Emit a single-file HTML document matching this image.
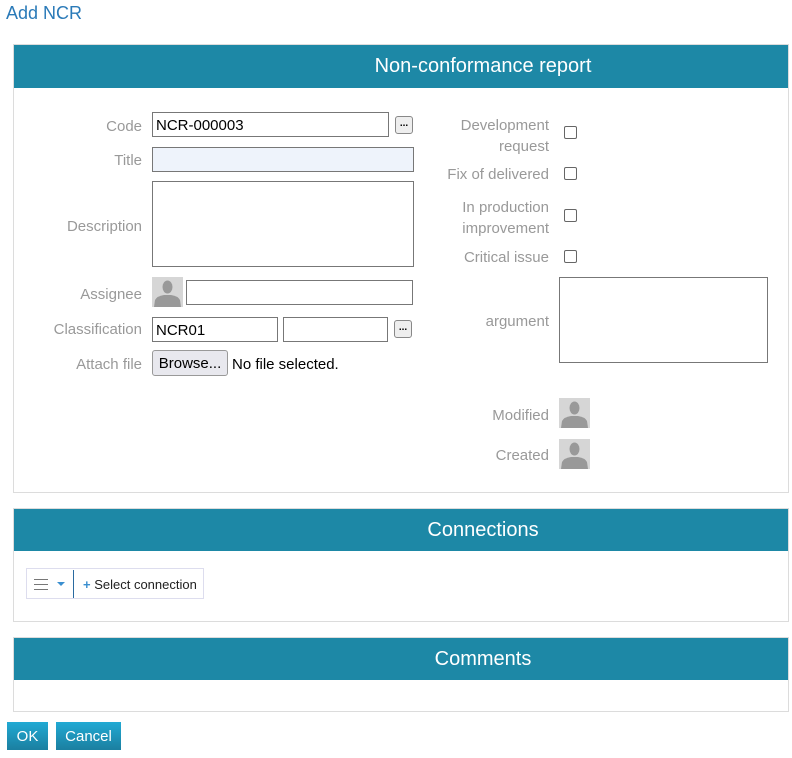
<!DOCTYPE html>
<html><head><style>
body{margin:0;width:792px;height:758px;background:#fff;font-family:"Liberation Sans",sans-serif;position:relative;overflow:hidden}
.a{position:absolute}
.t{font-size:18px;color:#2a7ab8;left:6px;top:3px}
.p{position:absolute;left:13px;width:776px;border:1px solid #dcdcdc;box-sizing:border-box}
.h{position:absolute;left:0;right:0;top:0;height:43px;background:#1d88a6;color:#fff;font-size:20px;text-align:center;line-height:43px;padding-left:164px;box-sizing:border-box}
.l{position:absolute;color:#999;font-size:15px;text-align:right}
.i{position:absolute;border:1px solid #777;background:#fff;box-sizing:border-box;font-size:15px;color:#000;padding-left:3px;line-height:25px}
.d{position:absolute;width:18px;height:18px;border:1px solid #888;border-radius:3px;background:#eee;box-sizing:border-box;font-size:10px;text-align:center;line-height:14px;font-weight:bold}
.c{position:absolute;width:13px;height:13px;border:1px solid #666;box-sizing:border-box;border-radius:2px}
.av{position:absolute;width:31px;height:30px;background:#d6d6d6}
.btn{position:absolute;top:722px;height:28px;background:linear-gradient(#21aad4,#1b7fa0);color:#fff;font-size:15px;line-height:29px;text-align:center}
</style></head><body>
<div class="a t">Add NCR</div>
<div class="p" style="top:44px;height:449px"><div class="h">Non-conformance report</div></div>
<div class="p" style="top:508px;height:114px"><div class="h" style="height:42px;line-height:42px">Connections</div></div>
<div class="p" style="top:637px;height:75px"><div class="h" style="height:42px;line-height:42px">Comments</div></div>

<div class="l" style="right:650px;top:118px">Code</div>
<div class="i" style="left:152px;top:112px;width:237px;height:25px">NCR-000003</div>
<div class="d" style="left:395px;top:116px">...</div>
<div class="l" style="right:650px;top:152px">Title</div>
<div class="i" style="left:152px;top:147px;width:262px;height:25px;background:#eef3fb"></div>
<div class="l" style="right:650px;top:218px">Description</div>
<div class="i" style="left:152px;top:181px;width:262px;height:86px"></div>
<div class="l" style="right:650px;top:286px">Assignee</div>
<div class="av" style="left:152px;top:277px"><svg width="31" height="30"><ellipse cx="15.5" cy="10" rx="5" ry="6.5" fill="#999"/><path d="M2 30 L3 23 Q5 19 12 18 L19 18 Q26 19 28 23 L29 30Z" fill="#999"/></svg></div>
<div class="i" style="left:186px;top:280px;width:227px;height:25px"></div>
<div class="l" style="right:650px;top:321px">Classification</div>
<div class="i" style="left:152px;top:317px;width:126px;height:25px">NCR01</div>
<div class="i" style="left:283px;top:317px;width:105px;height:25px"></div>
<div class="d" style="left:394px;top:320px">...</div>
<div class="l" style="right:650px;top:356px">Attach file</div>
<div class="a" style="left:152px;top:350px;width:74px;height:24px;border:1px solid #999;border-radius:3px;background:#e8e8ee;font-size:15px;line-height:26px;text-align:center">Browse...</div>
<div class="a" style="left:232px;top:356px;font-size:15px">No file selected.</div>

<div class="l" style="right:243px;top:115px;line-height:21px">Development<br>request</div>
<div class="c" style="left:564px;top:126px"></div>
<div class="l" style="right:243px;top:166px">Fix of delivered</div>
<div class="c" style="left:564px;top:167px"></div>
<div class="l" style="right:243px;top:197px;line-height:21px">In production<br>improvement</div>
<div class="c" style="left:564px;top:209px"></div>
<div class="l" style="right:243px;top:249px">Critical issue</div>
<div class="c" style="left:564px;top:250px"></div>
<div class="l" style="right:243px;top:313px">argument</div>
<div class="i" style="left:559px;top:277px;width:209px;height:86px"></div>
<div class="l" style="right:243px;top:407px">Modified</div>
<div class="av" style="left:559px;top:398px"><svg width="31" height="30"><ellipse cx="15.5" cy="10" rx="5" ry="6.5" fill="#999"/><path d="M2 30 L3 23 Q5 19 12 18 L19 18 Q26 19 28 23 L29 30Z" fill="#999"/></svg></div>
<div class="l" style="right:243px;top:447px">Created</div>
<div class="av" style="left:559px;top:439px"><svg width="31" height="30"><ellipse cx="15.5" cy="10" rx="5" ry="6.5" fill="#999"/><path d="M2 30 L3 23 Q5 19 12 18 L19 18 Q26 19 28 23 L29 30Z" fill="#999"/></svg></div>

<div class="a" style="left:26px;top:568px;width:178px;height:31px;border:1px solid #dde;box-sizing:border-box">
<div class="a" style="left:7px;top:10px;width:14px;height:9px;border-top:1px solid #777;border-bottom:1px solid #777"><div style="margin-top:4px;border-top:1px solid #777"></div></div>
<div class="a" style="left:30px;top:13px;border:4px solid transparent;border-top:4px solid #3a8fd0;border-bottom:0"></div>
<div class="a" style="left:46px;top:1px;width:1px;height:28px;background:#2a6aa0"></div>
<div class="a" style="left:56px;top:8px;font-size:13px;color:#222"><span style="color:#3a8fd0;font-weight:bold">+</span> Select connection</div>
</div>

<div class="btn" style="left:7px;width:41px">OK</div>
<div class="btn" style="left:56px;width:65px">Cancel</div>
</body></html>
